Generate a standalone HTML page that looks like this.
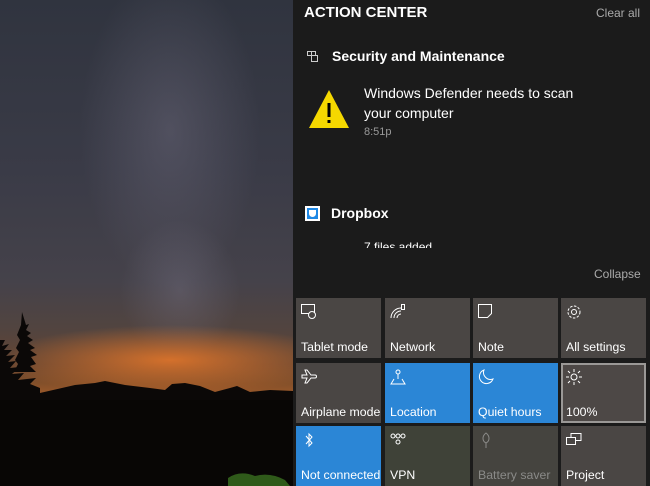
<!DOCTYPE html>
<html><head><meta charset="utf-8"><style>
*{margin:0;padding:0;box-sizing:border-box}
body{width:650px;height:486px;overflow:hidden;position:relative;font-family:"Liberation Sans",sans-serif;background:#000}
#wall{position:absolute;left:0;top:0;width:293px;height:486px;overflow:hidden;
background:linear-gradient(180deg,#30343f 0%,#3a3b47 35%,#45424a 58%,#52443f 68%,#664632 75%,#84502a 79%,#b0602a 83%,#c86a24 86%,#8a4420 90%)}
#panel{position:absolute;left:293px;top:0;width:357px;height:486px;background:#1b1b1b}
.t{position:absolute;color:#fff;white-space:nowrap}
.tile{position:absolute;width:85px;height:60px;background:#4a4644;color:#fff;font-size:12.3px}
.tile span{position:absolute;left:5px;bottom:4px;white-space:nowrap}
.tile svg{position:absolute;left:5px;top:6px}
.blue{background:#2b86d6}
</style></head><body>
<div id="wall">
<svg width="293" height="486" style="position:absolute;left:0;top:0">
<defs>
<radialGradient id="mw" cx="0.5" cy="0.5" r="0.5"><stop offset="0" stop-color="#7e7a8e" stop-opacity="0.35"/><stop offset="1" stop-color="#7e7a8e" stop-opacity="0"/></radialGradient>
<radialGradient id="gl" cx="0.5" cy="0.5" r="0.5"><stop offset="0" stop-color="#e8782a" stop-opacity="0.85"/><stop offset="1" stop-color="#e8782a" stop-opacity="0"/></radialGradient>
</defs>
<ellipse cx="170" cy="130" rx="90" ry="160" fill="url(#mw)"/>
<ellipse cx="180" cy="290" rx="60" ry="70" fill="url(#mw)"/>
<ellipse cx="170" cy="360" rx="170" ry="35" fill="url(#gl)"/>
<path d="M0 395 L40 393 L75 385 L95 383 L105 381 L115 383 L125 385 L150 388 L165 390 L172 384 L185 383 L200 386 L215 392 L230 388 L237 386 L250 392 L270 390 L293 391 L293 486 L0 486Z" fill="#0b0807"/>
<path d="M0 340 L5 340 L2 346 L9 344 L4 350 L12 350 L6 356 L15 355 L8 362 L16 361 L10 368 L20 367 L12 374 L24 373 L18 380 L36 378 L30 384 L40 388 L40 400 L0 400Z" fill="#0b0807"/>
<path d="M22 312 L26 325 L29 324 L26 330 L31 333 L27 336 L33 340 L28 343 L35 348 L30 350 L37 355 L31 357 L36 364 L30 366 L36 372 L14 372 L18 364 L15 360 L19 352 L16 348 L20 340 L17 335 L21 325Z" fill="#0b0807"/>
<rect x="0" y="400" width="293" height="86" fill="#080605"/>
<path d="M228 478 Q240 470 255 476 Q270 472 285 480 L290 486 L228 486Z" fill="#2f5a1a"/>
</svg>
</div>
<div id="panel">
<div class="t" style="left:11px;top:4px;font-size:15px;font-weight:bold">ACTION CENTER</div>
<div class="t" style="left:303px;top:6px;font-size:12px;color:#aaa">Clear all</div>
<svg style="position:absolute;left:14px;top:51px" width="11" height="11" viewBox="0 0 11 11" fill="none" stroke="#ccc" stroke-width="1"><path d="M.5 .5h4v4h-4zM4.5 4.5h6v6h-6zM.5 4.5h4v6M4.5 .5h4v4"/></svg>
<div class="t" style="left:39px;top:48px;font-size:14px;font-weight:bold">Security and Maintenance</div>
<svg style="position:absolute;left:15px;top:88px" width="42" height="42" viewBox="0 0 42 42"><path d="M21 2 L41 40 L1 40Z" fill="#f5d800"/><rect x="19.5" y="15" width="3" height="14" fill="#000"/><rect x="19.5" y="32" width="3" height="3" fill="#000"/></svg>
<div class="t" style="left:71px;top:83px;font-size:14px;line-height:20px">Windows Defender needs to scan<br>your computer</div>
<div class="t" style="left:71px;top:126px;font-size:11px;color:#999">8:51p</div>
<div style="position:absolute;left:12px;top:206px;width:15px;height:15px;background:#1e88e5;border:2px solid #fff"><div style="position:absolute;left:2px;top:2px;width:7px;height:7px;background:#fff;border-radius:0 0 4px 4px"></div></div>
<div class="t" style="left:38px;top:205px;font-size:14px;font-weight:bold">Dropbox</div>
<div style="position:absolute;left:71px;top:240px;width:85px;height:8px;overflow:hidden"><div class="t" style="left:0;top:0;font-size:12px">7 files added</div></div>
<div class="t" style="left:301px;top:267px;font-size:12px;color:#aaa">Collapse</div>
</div>
<div class="tile" style="left:296px;top:298px"><svg width="16" height="16" viewBox="0 0 16 16" fill="none" stroke="#fff"><rect x=".5" y=".5" width="13" height="9"/><circle cx="11" cy="11" r="3.5" fill="#4a4644"/></svg><span>Tablet mode</span></div>
<div class="tile" style="left:385px;top:298px"><svg width="16" height="16" viewBox="0 0 16 16" fill="none" stroke="#fff"><path d="M1 14a10 10 0 0 1 10-10M4 14a7 7 0 0 1 7-7M7 14a4 4 0 0 1 4-4"/><rect x="11.5" y=".5" width="3" height="5"/></svg><span>Network</span></div>
<div class="tile" style="left:473px;top:298px"><svg width="16" height="16" viewBox="0 0 16 16" fill="none" stroke="#fff"><path d="M.5 .5h13v9l-4 4h-9z"/></svg><span>Note</span></div>
<div class="tile" style="left:561px;top:298px"><svg width="16" height="16" viewBox="0 0 16 16" fill="none" stroke="#fff"><circle cx="8" cy="8" r="2.5"/><circle cx="8" cy="8" r="6" stroke-dasharray="2.5 1.5"/></svg><span>All settings</span></div>
<div class="tile" style="left:296px;top:363px"><svg width="16" height="16" viewBox="0 0 16 16" fill="none" stroke="#fff"><path d="M1 6h5l-2-5h2l4 5h4a1.5 1.5 0 0 1 0 3h-4l-4 5h-2l2-5h-5z"/></svg><span>Airplane mode</span></div>
<div class="tile blue" style="left:385px;top:363px"><svg width="16" height="16" viewBox="0 0 16 16" fill="none" stroke="#fff"><circle cx="8" cy="3" r="2"/><path d="M8 5v5M4 10l-3 5h14l-3-5"/></svg><span>Location</span></div>
<div class="tile blue" style="left:473px;top:363px"><svg width="16" height="16" viewBox="0 0 16 16" fill="none" stroke="#fff"><path d="M6 1a7 7 0 1 0 9 9A7 7 0 0 1 6 1z"/></svg><span>Quiet hours</span></div>
<div class="tile" style="left:561px;top:363px;border:2px solid #9a9896;background:#4d4846"><svg width="16" height="16" viewBox="0 0 16 16" fill="none" stroke="#fff" style="left:3px;top:4px"><circle cx="8" cy="8" r="3"/><path d="M8 0v3M8 13v3M0 8h3M13 8h3M2 2l2 2M12 12l2 2M2 14l2-2M12 4l2-2"/></svg><span style="left:3px;bottom:2px">100%</span></div>
<div class="tile blue" style="left:296px;top:426px"><svg width="16" height="16" viewBox="0 0 16 16" fill="none" stroke="#fff"><path d="M5 4l6 7-3 3V2l3 3-6 7"/></svg><span>Not connected</span></div>
<div class="tile" style="left:385px;top:426px;background:#3f4238"><svg width="16" height="16" viewBox="0 0 16 16" fill="none" stroke="#fff"><circle cx="3" cy="4" r="2"/><circle cx="8" cy="4" r="2"/><circle cx="13" cy="4" r="2"/><circle cx="8" cy="10" r="2"/></svg><span>VPN</span></div>
<div class="tile" style="left:473px;top:426px;background:#45443f;color:#8a8a88"><svg width="16" height="16" viewBox="0 0 16 16" fill="none" stroke="#8a8a88"><path d="M8 1c4 3 4 8 0 10c-4-2-4-7 0-10zM8 11v5"/></svg><span>Battery saver</span></div>
<div class="tile" style="left:561px;top:426px"><svg width="16" height="16" viewBox="0 0 16 16" fill="none" stroke="#fff"><rect x=".5" y="5.5" width="9" height="7"/><path d="M5 5V1.5h10v7h-5"/></svg><span>Project</span></div>
</body></html>
